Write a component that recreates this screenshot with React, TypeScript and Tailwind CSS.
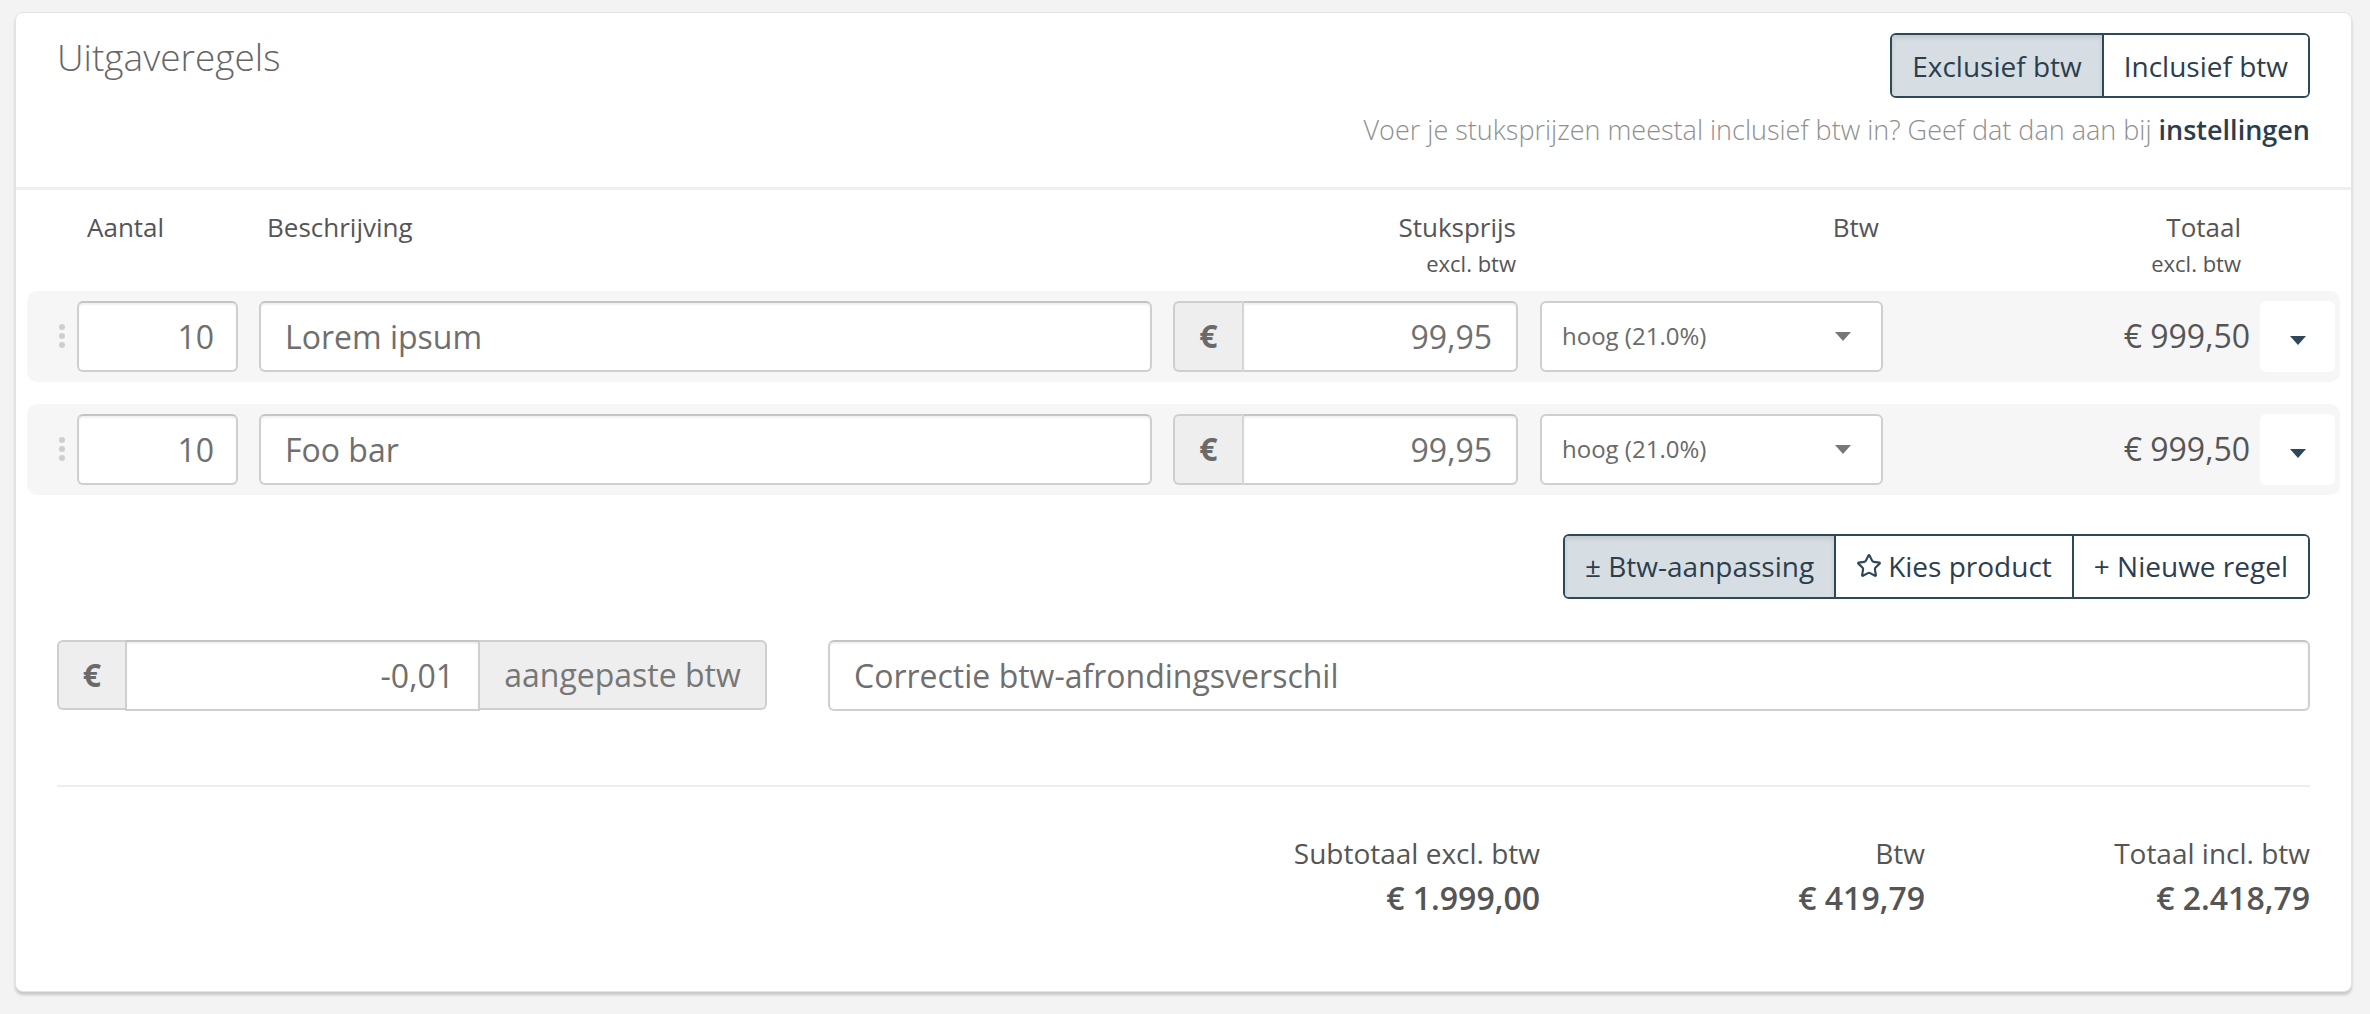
import { Star } from 'lucide-react';

const inputBase =
  'h-[71px] rounded-[6px] border-2 border-[#cfcfcf] border-t-[#c4c4c4] bg-white shadow-[inset_0_2px_2px_rgba(0,0,0,0.06)] outline-none text-[32px] text-[#6f6f6f]';

function DragHandle() {
  return (
    <div className="flex flex-col gap-[3px]">
      <span className="block w-[6px] h-[6px] rounded-full bg-[#cfcfcf]" />
      <span className="block w-[6px] h-[6px] rounded-full bg-[#cfcfcf]" />
      <span className="block w-[6px] h-[6px] rounded-full bg-[#cfcfcf]" />
    </div>
  );
}

function Caret({ color }: { color: string }) {
  return (
    <svg width="16" height="9" viewBox="0 0 16 9">
      <polygon points="0,0 16,0 8,9" fill={color} />
    </svg>
  );
}

function LineRow({ qty, desc, price, total }: { qty: string; desc: string; price: string; total: string }) {
  return (
    <div className="flex items-center h-[91px] rounded-[10px] bg-[#f6f6f6] pr-[5px]">
      <div className="w-[50px] flex justify-end pr-[12px]">
        <DragHandle />
      </div>
      <input readOnly value={qty} className={`${inputBase} w-[161px] text-right pr-[22px]`} />
      <input readOnly value={desc} className={`${inputBase} flex-1 ml-[21px] pl-[24px] min-w-0`} />
      <div className="ml-[21px] w-[345px] flex h-[71px]">
        <div className="w-[69px] flex items-center justify-center rounded-l-[6px] border-2 border-r-0 border-[#cfcfcf] bg-[#eeeeee] text-[32px] font-bold text-[#6a6a6a]">
          €
        </div>
        <input
          readOnly
          value={price}
          className={`${inputBase} rounded-l-none flex-1 min-w-0 text-right pr-[24px] border-l-[#d6d6d6]`}
        />
      </div>
      <div className="ml-[22px] w-[343px] h-[71px] flex items-center justify-between rounded-[6px] border-2 border-[#cfcfcf] bg-white pl-[20px] pr-[30px] text-[24px] text-[#6a6a6a]">
        <span>hoog (21.0%)</span>
        <Caret color="#777777" />
      </div>
      <div className="w-[377px] text-right pr-[10px] text-[32px] text-[#555555]">{total}</div>
      <div className="w-[75px] h-[71px] rounded-[6px] bg-white flex items-center justify-center pt-[8px]">
        <Caret color="#2c4859" />
      </div>
    </div>
  );
}

export default function App() {
  return (
    <div className="min-h-screen bg-[#f3f3f3] pt-[12px] pl-[15px] pr-[18px] font-['Open_Sans',sans-serif]">
      <div className="rounded-[8px] border border-[#e4e4e4] bg-white shadow-[0_3px_3px_rgba(0,0,0,0.18)] pb-[72px]">
        {/* Header */}
        <div className="flex justify-between px-[41px] pt-[20px] pb-[36px] border-b-[3px] border-[#efefef]">
          <h2 className="text-[37px] font-light text-[#666666] leading-[1.3]">Uitgaveregels</h2>
          <div className="flex flex-col items-end">
            <div className="flex h-[65px] rounded-[6px] border-2 border-[#2c4859] overflow-hidden text-[28px] text-[#2c3e4c]">
              <div className="flex items-center px-[20px] bg-[#d6dee4] shadow-[inset_0_3px_4px_rgba(0,0,0,0.1)] border-r-2 border-[#2c4859]">
                Exclusief btw
              </div>
              <div className="flex items-center px-[20px] bg-white">Inclusief btw</div>
            </div>
            <p className="mt-[12px] text-[27px] font-light text-[#8f8f8f]">
              Voer je stuksprijzen meestal inclusief btw in? Geef dat dan aan bij{' '}
              <span className="font-semibold text-[#2c3e4c]">instellingen</span>
            </p>
          </div>
        </div>

        {/* Lines */}
        <div className="px-[11px]">
          <div className="flex items-start pt-[20px] pb-[13px] pr-[5px] text-[26px] text-[#555555]">
            <div className="w-[50px]" />
            <div className="w-[161px] pl-[10px] leading-[34px]">Aantal</div>
            <div className="flex-1 ml-[21px] pl-[8px] leading-[34px]">Beschrijving</div>
            <div className="ml-[21px] w-[345px] text-right pr-[2px]">
              <div className="leading-[34px]">Stuksprijs</div>
              <div className="text-[22px] leading-[30px] mt-[4px]">excl. btw</div>
            </div>
            <div className="ml-[22px] w-[343px] text-right pr-[4px] leading-[34px]">Btw</div>
            <div className="w-[377px] text-right pr-[19px]">
              <div className="leading-[34px]">Totaal</div>
              <div className="text-[22px] leading-[30px] mt-[4px]">excl. btw</div>
            </div>
            <div className="w-[75px]" />
          </div>
          <div className="flex flex-col gap-[22px]">
            <LineRow qty="10" desc="Lorem ipsum" price="99,95" total="€ 999,50" />
            <LineRow qty="10" desc="Foo bar" price="99,95" total="€ 999,50" />
          </div>
        </div>

        {/* Actions */}
        <div className="flex justify-end px-[41px] mt-[39px]">
          <div className="flex h-[65px] rounded-[6px] border-2 border-[#2c4859] overflow-hidden text-[28px] text-[#2c3e4c]">
            <div className="flex items-center px-[20px] bg-[#d6dee4] shadow-[inset_0_3px_4px_rgba(0,0,0,0.1)] border-r-2 border-[#2c4859]">
              ± Btw-aanpassing
            </div>
            <div className="flex items-center gap-[6px] px-[20px] bg-white border-r-2 border-[#2c4859]">
              <Star size={26} strokeWidth={2} className="text-[#2c4859]" />
              Kies product
            </div>
            <div className="flex items-center px-[20px] bg-white">+ Nieuwe regel</div>
          </div>
        </div>

        {/* VAT adjustment */}
        <div className="flex gap-[61px] px-[41px] mt-[41px]">
          <div className="w-[710px] flex h-[70px]">
            <div className="w-[68px] flex items-center justify-center rounded-l-[6px] border-2 border-r-0 border-[#cfcfcf] bg-[#eeeeee] text-[32px] font-bold text-[#6a6a6a]">
              €
            </div>
            <input
              readOnly
              value="-0,01"
              className={`${inputBase} h-[70px] rounded-none flex-1 min-w-0 text-right pr-[24px]`}
            />
            <div className="w-[287px] flex items-center justify-center rounded-r-[6px] border-2 border-l-0 border-[#cfcfcf] bg-[#eeeeee] text-[32px] text-[#777777]">
              aangepaste btw
            </div>
          </div>
          <input
            readOnly
            value="Correctie btw-afrondingsverschil"
            className={`${inputBase} h-[70px] flex-1 min-w-0 pl-[24px]`}
          />
        </div>

        <div className="mx-[41px] mt-[74px] border-t-2 border-[#ededed]" />

        {/* Summary */}
        <div className="flex justify-end px-[41px] mt-[48px] text-[#555555]">
          <div className="w-[385px] text-right">
            <div className="text-[28px] leading-[36px]">Subtotaal excl. btw</div>
            <div className="text-[32px] font-semibold leading-[42px] mt-[6px]">€ 1.999,00</div>
          </div>
          <div className="w-[385px] text-right">
            <div className="text-[28px] leading-[36px]">Btw</div>
            <div className="text-[32px] font-semibold leading-[42px] mt-[6px]">€ 419,79</div>
          </div>
          <div className="w-[385px] text-right">
            <div className="text-[28px] leading-[36px]">Totaal incl. btw</div>
            <div className="text-[32px] font-semibold leading-[42px] mt-[6px]">€ 2.418,79</div>
          </div>
        </div>
      </div>
    </div>
  );
}
